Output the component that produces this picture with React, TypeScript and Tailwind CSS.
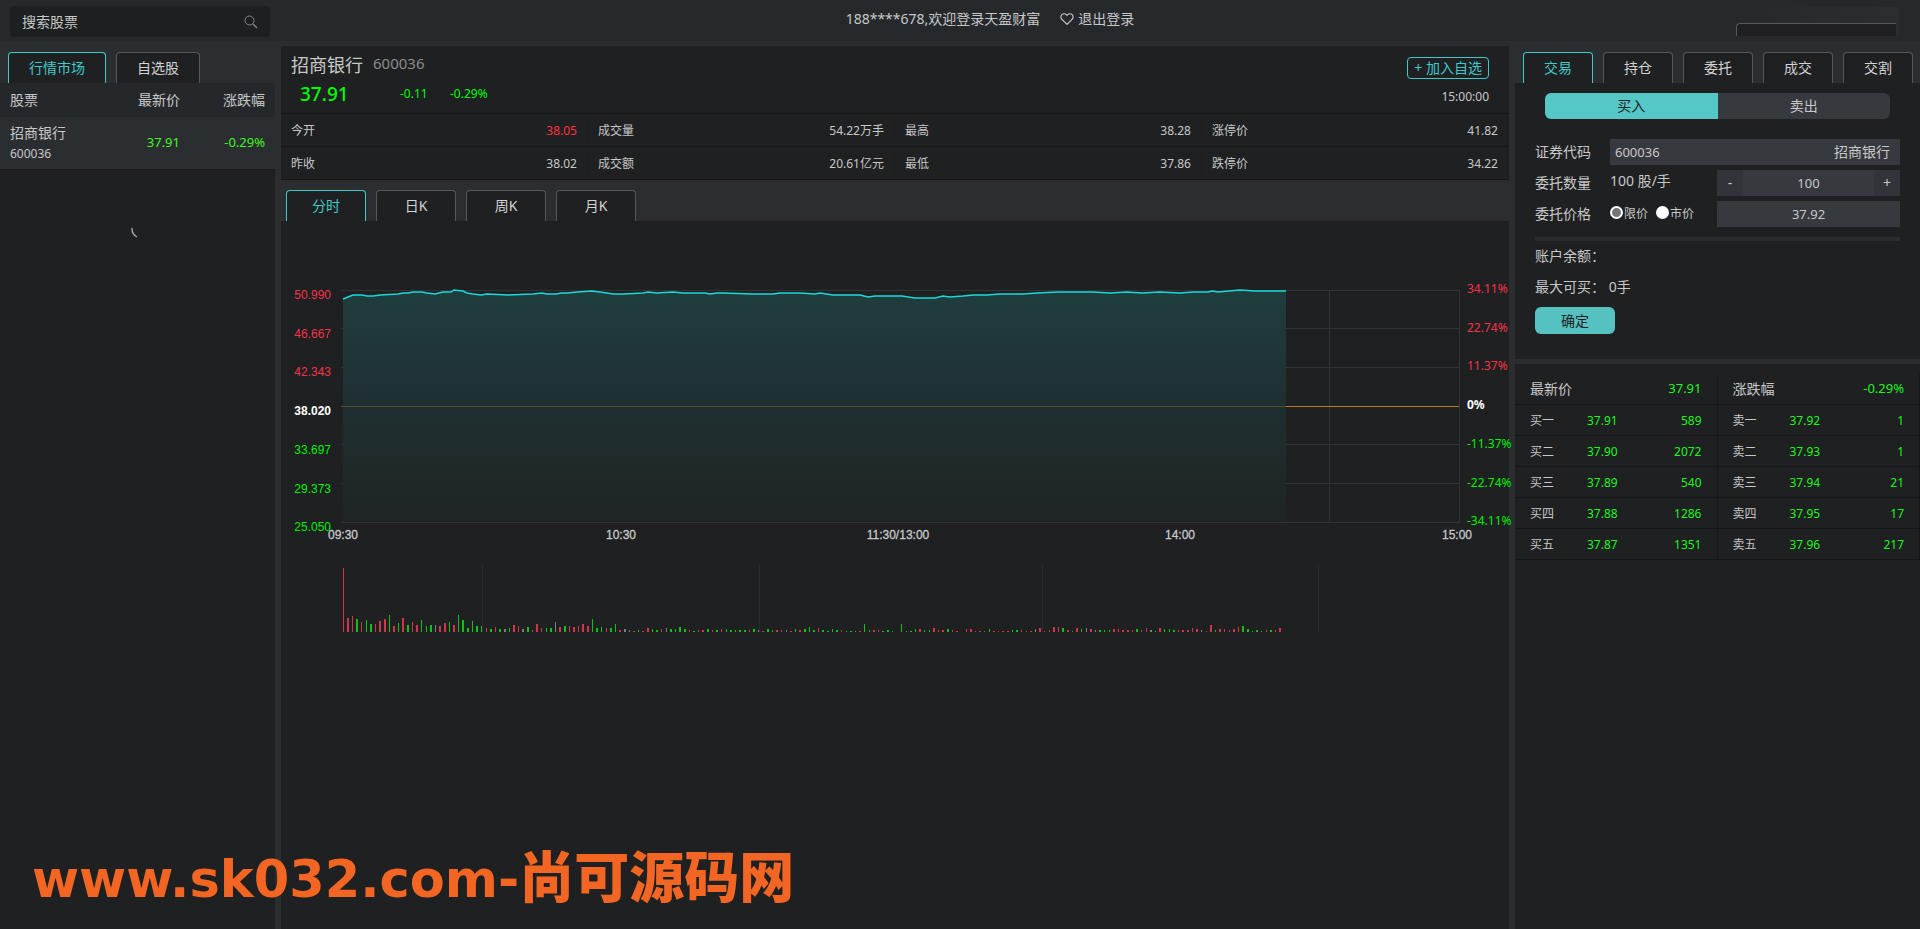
import { useState } from "react";
import { FiHeart } from "react-icons/fi";

const quote = [
  [
    { label: "今开", value: "38.05", up: true },
    { label: "成交量", value: "54.22万手" },
    { label: "最高", value: "38.28" },
    { label: "涨停价", value: "41.82" },
  ],
  [
    { label: "昨收", value: "38.02" },
    { label: "成交额", value: "20.61亿元" },
    { label: "最低", value: "37.86" },
    { label: "跌停价", value: "34.22" },
  ],
];

const buyOrders = [
  ["买一", "37.91", "589"],
  ["买二", "37.90", "2072"],
  ["买三", "37.89", "540"],
  ["买四", "37.88", "1286"],
  ["买五", "37.87", "1351"],
];

const sellOrders = [
  ["卖一", "37.92", "1"],
  ["卖二", "37.93", "1"],
  ["卖三", "37.94", "21"],
  ["卖四", "37.95", "17"],
  ["卖五", "37.96", "217"],
];

const RED = "#f5334b";
const GREEN = "#00f000";

const axis = [
  { price: "50.990", rate: "34.11%", color: RED },
  { price: "46.667", rate: "22.74%", color: RED },
  { price: "42.343", rate: "11.37%", color: RED },
  { price: "38.020", rate: "0%", color: "#ffffff" },
  { price: "33.697", rate: "-11.37%", color: GREEN },
  { price: "29.373", rate: "-22.74%", color: GREEN },
  { price: "25.050", rate: "-34.11%", color: GREEN },
];

const times = [
  { x: 62, text: "09:30" },
  { x: 340, text: "10:30" },
  { x: 617, text: "11:30/13:00" },
  { x: 899, text: "14:00" },
  { x: 1176, text: "15:00" },
];

const pricePath =
  "62,78 67,76 72,74 81,74 86,75 92,75 99,74 117,73 122,72 127,72 132,71 141,71 146,72 154,73 162,71 170,71 173,69 182,70 186,72 192,73 200,74 206,73 227,74 252,73 261,72 266,73 275,73 280,72 286,72 296,71 311,70 326,72 332,73 342,73 362,72 367,71 376,72 392,71 402,72 424,72 429,73 436,72 442,72 472,73 492,73 499,72 519,72 534,73 539,72 552,74 579,74 587,76 594,75 621,75 634,77 654,77 662,75 669,76 682,75 692,74 706,74 719,73 742,73 756,72 777,71 812,71 829,72 846,71 861,72 879,71 899,72 912,71 927,71 931,70 937,71 959,69 974,70 1005,70";

// minute volume: colour letter + height
const volume =
  "r64 r14 r16 g13 r10 g12 g8 r8 r11 r13 g17 r6 g9 r14 g7 r10 r7 g12 g6 g7 n7 r6 r9 g10 r7 g17 g12 g4 g11 g6 g6 r4 g3 r5 g3 n3 g4 r7 r6 n3 g5 r2 r8 r4 g4 g4 n10 r5 g6 r6 r5 r6 r8 r6 g13 g4 g5 r4 g4 g8 r2 n3 n2 r1 g2 r1 r4 g3 g2 r3 n4 g3 g3 g5 g3 r2 g1 r2 r2 g3 r2 g2 r3 g3 g2 g2 g2 g2 r2 g3 n2 r1 g3 g2 r2 r2 n2 r1 g3 r2 g3 g5 g2 r4 g2 g1 g3 g2 r2 g1 g1 g1 r1 g8 g2 r2 r2 g1 g2 g1 n0 g8 g1 g1 g3 r3 g2 g2 r4 r2 r2 g3 r2 r1 n0 r3 r3 r1 r1 r1 g3 r1 r1 r1 r1 g2 g2 r2 r1 r1 n3 r4 r1 r2 r5 r5 g4 r2 g1 r4 g3 n4 r3 n2 g2 g2 g2 r3 r3 r2 r2 r2 g3 r2 r4 n2 g1 r4 g3 g3 g2 r2 r2 r2 r4 r3 n2 r1 r7 g2 r3 r3 r2 r3 r5 g6 g3 g1 g2 n1 r2 g2 r2 r4".split(
    " "
  );

const barColor: Record<string, string> = {
  r: "#d0354a",
  g: "#12c01a",
  n: "#7c7f85",
};

type TabsProps = {
  items: string[];
  active: number;
  onChange: (i: number) => void;
  tabClass: string;
};

const Tabs = ({ items, active, onChange, tabClass }: TabsProps) => (
  <div className="flex gap-[10px]">
    {items.map((item, i) => (
      <button
        key={item}
        onClick={() => onChange(i)}
        className={`h-[31px] rounded-t border border-b-0 bg-[#1e2021] text-sm ${tabClass} ${
          i === active ? "border-[#41c9c9] text-[#41c9c9]" : "border-[#55595c] text-[#d4d4d4]"
        }`}
      >
        {item}
      </button>
    ))}
  </div>
);

const Header = () => (
  <header className="flex h-[41px] shrink-0 bg-[#25292c]">
    <div className="w-[275px] pt-[6px] pl-[10px] pr-[5px]">
      <div className="flex h-[31px] items-center rounded bg-[#1d2021] px-3">
        <input
          type="text"
          aria-label="搜索股票"
          placeholder="搜索股票"
          className="w-full min-w-0 bg-transparent text-sm outline-none placeholder:text-[#c8c8c8]"
        />
        <button aria-label="搜索">
          <svg width="14" height="14" viewBox="0 0 14 14" fill="none" stroke="#85888a">
            <circle cx="5.500" cy="5.500" r="4.500" />
            <path d="M8.700 8.700 L13 13" strokeWidth="1.300" />
          </svg>
        </button>
      </div>
    </div>
    <div className="flex flex-1 items-center justify-center gap-5 pb-1 text-sm">
      <span>188****678,欢迎登录天盈财富</span>
      <a href="#" className="flex items-center gap-1">
        <FiHeart size={14} />
        退出登录
      </a>
    </div>
    <div className="w-[215px] pr-[21px] pt-[7px]">
      <div className="rounded bg-linear-to-r from-[#25292c] to-[#2a2e31] pl-[31px] pt-4">
        <div className="h-[13px] w-[160px] rounded-tl border-t border-l border-[#55595c] bg-[#1e2021]" />
      </div>
    </div>
  </header>
);

const Market = () => {
  const [tab, setTab] = useState(0);
  return (
    <aside className="flex w-[275px] shrink-0 flex-col">
      <div className="pl-2 pt-[11px]">
        <Tabs items={["行情市场", "自选股"]} active={tab} onChange={setTab} tabClass="px-5" />
      </div>
      <table className="w-full table-fixed text-sm">
        <thead>
          <tr className="h-[34px] bg-[#25282b] text-left">
            <th className="w-[100px] pl-[10px] font-normal">股票</th>
            <th className="w-[80px] text-right font-normal">最新价</th>
            <th className="pr-[10px] text-right font-normal">涨跌幅</th>
          </tr>
        </thead>
        <tbody>
          <tr className="h-[52px] border-b border-[#17191a] bg-[#2a2e31]">
            <td className="pl-[10px]">
              <p className="leading-[22px]">招商银行</p>
              <p className="text-xs leading-[20px]">600036</p>
            </td>
            <td className="text-right text-[13px] text-[#42f51e]">37.91</td>
            <td className="pr-[10px] text-right text-[13px] text-[#42f51e]">-0.29%</td>
          </tr>
        </tbody>
      </table>
      <div className="flex flex-1 justify-center bg-[#1e2021] pt-14">
        <svg width="14" height="14" viewBox="0 0 14 14" fill="none">
          <path d="M1 2 Q0.500 8 6 11" stroke="#a4a6a8" strokeWidth="1.400" />
        </svg>
      </div>
    </aside>
  );
};

const Chart = () => (
  <svg viewBox="0 0 1228 430" className="block w-full overflow-visible" fontSize="12">
    <defs>
      <linearGradient id="area" x1="0" y1="0" x2="0" y2="1">
        <stop offset="0" stopColor="#203d3d" />
        <stop offset="0.5" stopColor="#1f2f31" />
        <stop offset="1" stopColor="#1f2425" />
      </linearGradient>
    </defs>

    {/* grid */}
    <g stroke="#303437" shapeRendering="crispEdges">
      {[69.5, 107.5, 146.5, 223.5, 262.5, 301.5].map((y) => (
        <line key={y} x1="60" x2="1178" y1={y} y2={y} />
      ))}
      <line x1="1048.5" x2="1048.5" y1="69" y2="302" />
      <line x1="1178.5" x2="1178.5" y1="69" y2="302" />
    </g>

    <polygon points={`62,301 ${pricePath} 1005,301`} fill="url(#area)" />
    <polyline points={pricePath} fill="none" stroke="#19d9dc" strokeWidth="1.400" />
    <g shapeRendering="crispEdges">
      <line x1="60" x2="1005" y1="185.5" y2="185.5" stroke="#55492f" />
      <line x1="1005" x2="1178" y1="185.5" y2="185.5" stroke="#b57d12" />
    </g>

    {axis.map((a, i) => (
      <g key={a.price} fill={a.color} fontWeight={i === 3 ? 700 : 400}>
        <text x="50" y={78 + Math.round(i * 38.7)} textAnchor="end" className="font-['Liberation_Sans',sans-serif]">
          {a.price}
        </text>
        <text x="1186" y={72 + Math.round(i * 38.7)}>
          {a.rate}
        </text>
      </g>
    ))}

    {times.map((t) => (
      <text
        key={t.text}
        x={t.x}
        y="318"
        textAnchor="middle"
        fill="#c8c8c8"
        stroke="#c8c8c8"
        strokeWidth="0.300"
        className="font-['Liberation_Sans',sans-serif]"
      >
        {t.text}
      </text>
    ))}

    {/* volume */}
    <g shapeRendering="crispEdges">
      {[201, 478, 761, 1037].map((x) => (
        <rect key={x} x={x} y="344" width="1" height="67" fill="#292c2e" />
      ))}
      {volume.map((v, i) => {
        const h = Number(v.slice(1));
        return (
          <rect key={i} x={61.5 + i * 4.615} y={411 - h} width="1.500" height={h} fill={barColor[v[0]]} />
        );
      })}
    </g>
  </svg>
);

const Stock = () => {
  const [tab, setTab] = useState(0);
  return (
    <main className="flex min-w-0 flex-1 flex-col pt-[5px]">
      <section className="bg-[#1e2021]">
        <div className="flex h-[67px] justify-between pl-[10px] pr-5">
          <div>
            <div className="flex h-[34px] items-center gap-[10px] pt-1">
              <h1 className="text-lg">招商银行</h1>
              <span className="pb-1 text-[15px] text-[#8c8c8c]">600036</span>
            </div>
            <div className="flex items-center pl-[9px] text-xs leading-[28px] text-[#00ff00]">
              <span className="w-[100px] text-[19px] font-medium">37.91</span>
              <span className="w-[50px]">-0.11</span>
              <span>-0.29%</span>
            </div>
          </div>
          <div className="flex flex-col items-end gap-[8px] pt-[11px]">
            <button className="h-[22px] rounded border border-[#41c9c9] px-[6px] text-sm leading-[20px] text-[#41c9c9]">
              + 加入自选
            </button>
            <span className="text-xs leading-[20px]">15:00:00</span>
          </div>
        </div>
        {quote.map((row, i) => (
          <dl key={i} className="grid h-[33px] grid-cols-4 items-center border-t border-[#151718] text-xs last:h-[34px] last:border-b">
            {row.map((cell) => (
              <div key={cell.label} className="flex justify-between border-r border-[#1b1d1e] px-[10px] pt-[2px] leading-[22px]">
                <dt>{cell.label}</dt>
                <dd className={cell.up ? "text-[#ff3040]" : ""}>{cell.value}</dd>
              </div>
            ))}
          </dl>
        ))}
      </section>
      <div className="pl-[5px] pt-[10px]">
        <Tabs items={["分时", "日K", "周K", "月K"]} active={tab} onChange={setTab} tabClass="w-20" />
      </div>
      <section className="flex-1 bg-[#1e2021]">
        <Chart />
      </section>
    </main>
  );
};

const TradeForm = () => {
  const [side, setSide] = useState("buy");
  const [amount, setAmount] = useState(100);
  const [type, setType] = useState("limit");
  const radio =
    "mb-1 h-[13px] w-[13px] appearance-none rounded-full border-2 border-white bg-white checked:bg-[#767676]";

  return (
    <section className="h-[276px] bg-[#1e2021] px-5 pt-[10px] text-sm">
      <div className="mx-[10px] mb-5 grid h-[26px] grid-cols-2 overflow-hidden rounded-md">
        <button
          onClick={() => setSide("buy")}
          className={side === "buy" ? "bg-[#56c7c7] text-[#1e2021]" : "bg-[#363a3f]"}
        >
          买入
        </button>
        <button
          onClick={() => setSide("sell")}
          className={side === "sell" ? "bg-[#56c7c7] text-[#1e2021]" : "bg-[#363a3f]"}
        >
          卖出
        </button>
      </div>

      <div className="flex flex-col gap-[5px]">
        <div className="flex h-[26px] items-center">
          <label htmlFor="code" className="w-[75px]">
            证券代码
          </label>
          <div className="flex h-full flex-1 items-center bg-[#363a3f] pl-[5px] pr-[10px]">
            <input id="code" defaultValue="600036" className="w-full min-w-0 flex-1 bg-transparent text-[13px] outline-none" />
            <span>招商银行</span>
          </div>
        </div>
        <div className="flex h-[26px] items-center">
          <label htmlFor="amount" className="w-[75px]">
            委托数量
          </label>
          <span className="flex-1 pb-1">100 股/手</span>
          <div className="flex h-full w-[183px] bg-[#363a3f]">
            <button className="w-[26px] bg-[#313539]" onClick={() => setAmount(Math.max(100, amount - 100))}>
              -
            </button>
            <input
              id="amount"
              value={amount}
              onChange={(e) => setAmount(Number(e.target.value) || 0)}
              className="w-full min-w-0 flex-1 bg-transparent text-center text-[13px] outline-none"
            />
            <button className="w-[26px] bg-[#313539]" onClick={() => setAmount(amount + 100)}>
              +
            </button>
          </div>
        </div>
        <div className="flex h-[26px] items-center">
          <label htmlFor="price" className="w-[75px]">
            委托价格
          </label>
          <div className="flex flex-1 gap-2 text-xs">
            <label className="flex items-center gap-px">
              <input type="radio" name="type" className={radio} checked={type === "limit"} onChange={() => setType("limit")} />
              限价
            </label>
            <label className="flex items-center gap-px">
              <input type="radio" name="type" className={radio} checked={type === "market"} onChange={() => setType("market")} />
              市价
            </label>
          </div>
          <input id="price" defaultValue="37.92" className="h-full w-[183px] bg-[#363a3f] text-center text-[13px] outline-none" />
        </div>
      </div>

      <hr className="mt-[10px] mb-[2px] h-1 border-0 bg-[#2a2d30]" />
      <p className="mb-[5px] h-[26px] leading-[26px]">账户余额：</p>
      <p className="mb-[7px] h-[26px] leading-[26px]">
        最大可买： <span>0手</span>
      </p>
      <button className="h-[27px] w-20 rounded-md bg-[#56c1c1] text-[#1e2021]">确定</button>
    </section>
  );
};

type BookProps = { title: string; value: string; rows: string[][] };

const Book = ({ title, value, rows }: BookProps) => (
  <table className="w-full table-fixed border-r border-[#151718] text-xs">
    <thead>
      <tr className="h-[30px] border-b border-[#151718] text-sm">
        <th className="w-[72px] pl-[15px] text-left font-normal">{title}</th>
        <th colSpan={2} className="pr-[15px] text-right text-[13px] font-normal text-[#1df51d]">
          {value}
        </th>
      </tr>
    </thead>
    <tbody>
      {rows.map(([label, price, count]) => (
        <tr key={label} className="h-[31px] border-b border-[#151718] text-[#1df51d]">
          <td className="pl-[15px] pt-[2px] text-[#c8c8c8]">{label}</td>
          <td className="pt-[2px]">{price}</td>
          <td className="pt-[2px] pr-[15px] text-right">{count}</td>
        </tr>
      ))}
    </tbody>
  </table>
);

const Trade = () => {
  const [tab, setTab] = useState(0);
  return (
    <aside className="flex w-[405px] shrink-0 flex-col pt-[11px]">
      <div className="pl-2">
        <Tabs
          items={["交易", "持仓", "委托", "成交", "交割"]}
          active={tab}
          onChange={setTab}
          tabClass="w-[70px]"
        />
      </div>
      <TradeForm />
      <section className="mt-[5px] grid flex-1 grid-cols-2 items-start bg-[#1e2021] pt-[10px]">
        <Book title="最新价" value="37.91" rows={buyOrders} />
        <Book title="涨跌幅" value="-0.29%" rows={sellOrders} />
      </section>
    </aside>
  );
};

export default function App() {
  return (
    <div className="relative flex min-h-screen flex-col bg-[#2a2e31] font-['Noto_Sans','Noto_Sans_CJK_SC',sans-serif] text-[#c8c8c8]">
      <Header />
      <div className="flex flex-1 gap-[6px]">
        <Market />
        <Stock />
        <Trade />
      </div>
      <p className="pointer-events-none absolute bottom-1 left-8 flex items-baseline font-['DejaVu_Sans','Noto_Sans_CJK_SC',sans-serif] text-[51px] leading-[90px] font-bold whitespace-nowrap text-[#f26522]">
        www.sk032.com-<span className="text-[55px] font-black">尚可源码网</span>
      </p>
    </div>
  );
}
